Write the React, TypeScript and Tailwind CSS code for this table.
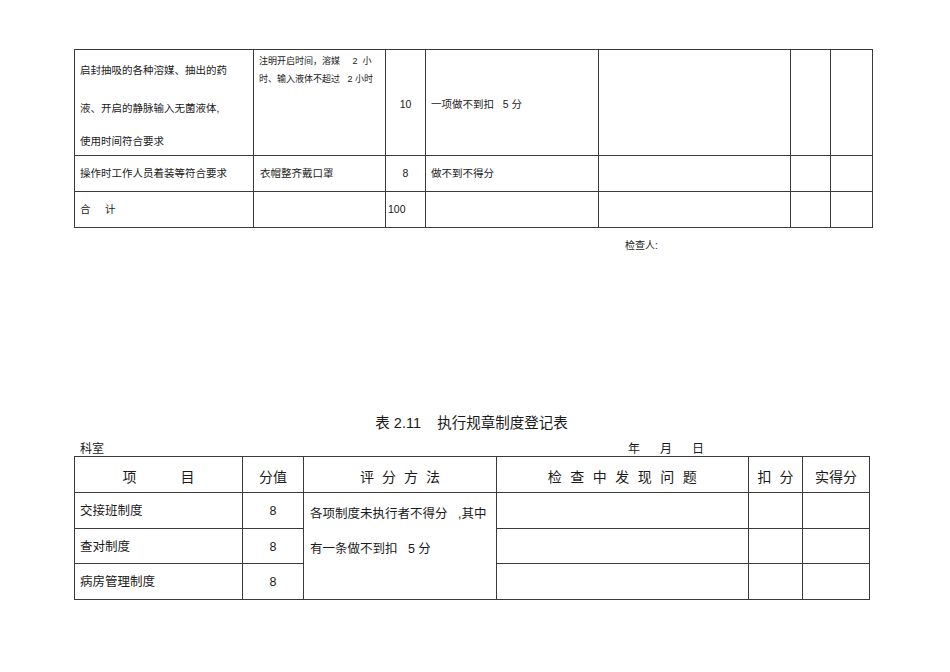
const font = { fontFamily: '"Liberation Sans", "Noto Sans CJK SC", sans-serif' };

const b = "border border-[#3a3a3a]";

const InspectionTable = () => (
  <table className="table-fixed border-collapse text-[#1a1a1a]" style={{ width: 798 }}>
    <colgroup>
      <col className="w-[179px]" />
      <col className="w-[132px]" />
      <col className="w-[40px]" />
      <col className="w-[173px]" />
      <col className="w-[192px]" />
      <col className="w-[40px]" />
      <col className="w-[42px]" />
    </colgroup>
    <tbody>
      <tr className="h-[106px]">
        <td className={`${b} align-top px-[5px] pt-[3px] text-[10.5px]`}>
          <div className="h-[36px] flex items-center">启封抽吸的各种溶媒、抽出的药</div>
          <div className="h-[40px] flex items-center">液、开启的静脉输入无菌液体,</div>
          <div className="h-[26px] flex items-center">使用时间符合要求</div>
        </td>
        <td className={`${b} align-top pl-[5px] pr-[3px] pt-[2px] text-[9px] leading-[18px]`}>
          <div>注明开启时间，溶媒&nbsp;&nbsp;&nbsp;&nbsp;&nbsp;2&nbsp;&nbsp;小</div>
          <div>时、输入液体不超过&nbsp;&nbsp;&nbsp;2 小时</div>
        </td>
        <td className={`${b} text-center align-middle text-[10.5px] pt-[4px]`}>10</td>
        <td className={`${b} align-middle px-[5px] text-[10.5px] pt-[4px]`}>一项做不到扣&nbsp;&nbsp;&nbsp;5 分</td>
        <td className={b}></td>
        <td className={b}></td>
        <td className={b}></td>
      </tr>
      <tr className="h-[36px]">
        <td className={`${b} px-[5px] text-[10.5px]`}>操作时工作人员着装等符合要求</td>
        <td className={`${b} px-[6px] text-[10.5px]`}>衣帽整齐戴口罩</td>
        <td className={`${b} text-center text-[10.5px]`}>8</td>
        <td className={`${b} px-[5px] text-[10.5px]`}>做不到不得分</td>
        <td className={b}></td>
        <td className={b}></td>
        <td className={b}></td>
      </tr>
      <tr className="h-[36px]">
        <td className={`${b} px-[5px] text-[10.5px]`}>合&nbsp;&nbsp;&nbsp;&nbsp;&nbsp;计</td>
        <td className={b}></td>
        <td className={`${b} px-[2px] text-[10.5px]`}>100</td>
        <td className={b}></td>
        <td className={b}></td>
        <td className={b}></td>
        <td className={b}></td>
      </tr>
    </tbody>
  </table>
);

const RuleTable = () => {
  const rows = ["交接班制度", "查对制度", "病房管理制度"];
  return (
    <table className="table-fixed border-collapse text-[#1a1a1a]" style={{ width: 795 }}>
      <colgroup>
        <col className="w-[168px]" />
        <col className="w-[61px]" />
        <col className="w-[193px]" />
        <col className="w-[252px]" />
        <col className="w-[54px]" />
        <col className="w-[67px]" />
      </colgroup>
      <thead>
        <tr className="h-[36px] text-[14px] font-normal">
          <th className={`${b} font-normal pt-[5px]`}>
            <span className="inline-flex gap-[44px]">
              <span>项</span>
              <span>目</span>
            </span>
          </th>
          <th className={`${b} font-normal pt-[5px]`}>分值</th>
          <th className={`${b} font-normal tracking-[8px] pl-[8px] pt-[5px]`}>评分方法</th>
          <th className={`${b} font-normal tracking-[8.5px] pl-[8px] pt-[5px]`}>检查中发现问题</th>
          <th className={`${b} font-normal tracking-[8px] pl-[8px] pt-[5px]`}>扣分</th>
          <th className={`${b} font-normal pt-[5px]`}>实得分</th>
        </tr>
      </thead>
      <tbody>
        {rows.map((name, i) => (
          <tr key={name} className="h-[35.5px] text-[12.5px]">
            <td className={`${b} px-[5px] pt-[3px]`}>{name}</td>
            <td className={`${b} text-center pt-[3px]`}>8</td>
            {i === 0 && (
              <td rowSpan={3} className={`${b} align-top px-[6px] pt-[4px] leading-[35px]`}>
                <div>各项制度未执行者不得分&nbsp;&nbsp;&nbsp;,其中</div>
                <div>有一条做不到扣&nbsp;&nbsp;&nbsp;5 分</div>
              </td>
            )}
            <td className={b}></td>
            <td className={b}></td>
            <td className={b}></td>
          </tr>
        ))}
      </tbody>
    </table>
  );
};

export default function App() {
  return (
    <div className="w-[950px] h-[672px] bg-white overflow-hidden" style={font}>
      <div className="pl-[74px] pt-[49px]">
        <InspectionTable />
        <div className="pl-[551px] pt-[10px] text-[10px] text-[#1a1a1a]">检查人:</div>
      </div>
      <div className="pl-[74px] pt-[160px]">
        <div className="w-[795px] text-center text-[14.5px] text-[#1a1a1a] leading-[20px]">
          表 2.11&nbsp;&nbsp;&nbsp;&nbsp;执行规章制度登记表
        </div>
        <div className="flex w-[795px] pt-[9px] text-[12px] leading-[14px] text-[#1a1a1a]">
          <span className="pl-[6px]">科室</span>
          <span className="ml-[524px] flex gap-[20px]">
            <span>年</span>
            <span>月</span>
            <span>日</span>
          </span>
        </div>
        <RuleTable />
      </div>
    </div>
  );
}
